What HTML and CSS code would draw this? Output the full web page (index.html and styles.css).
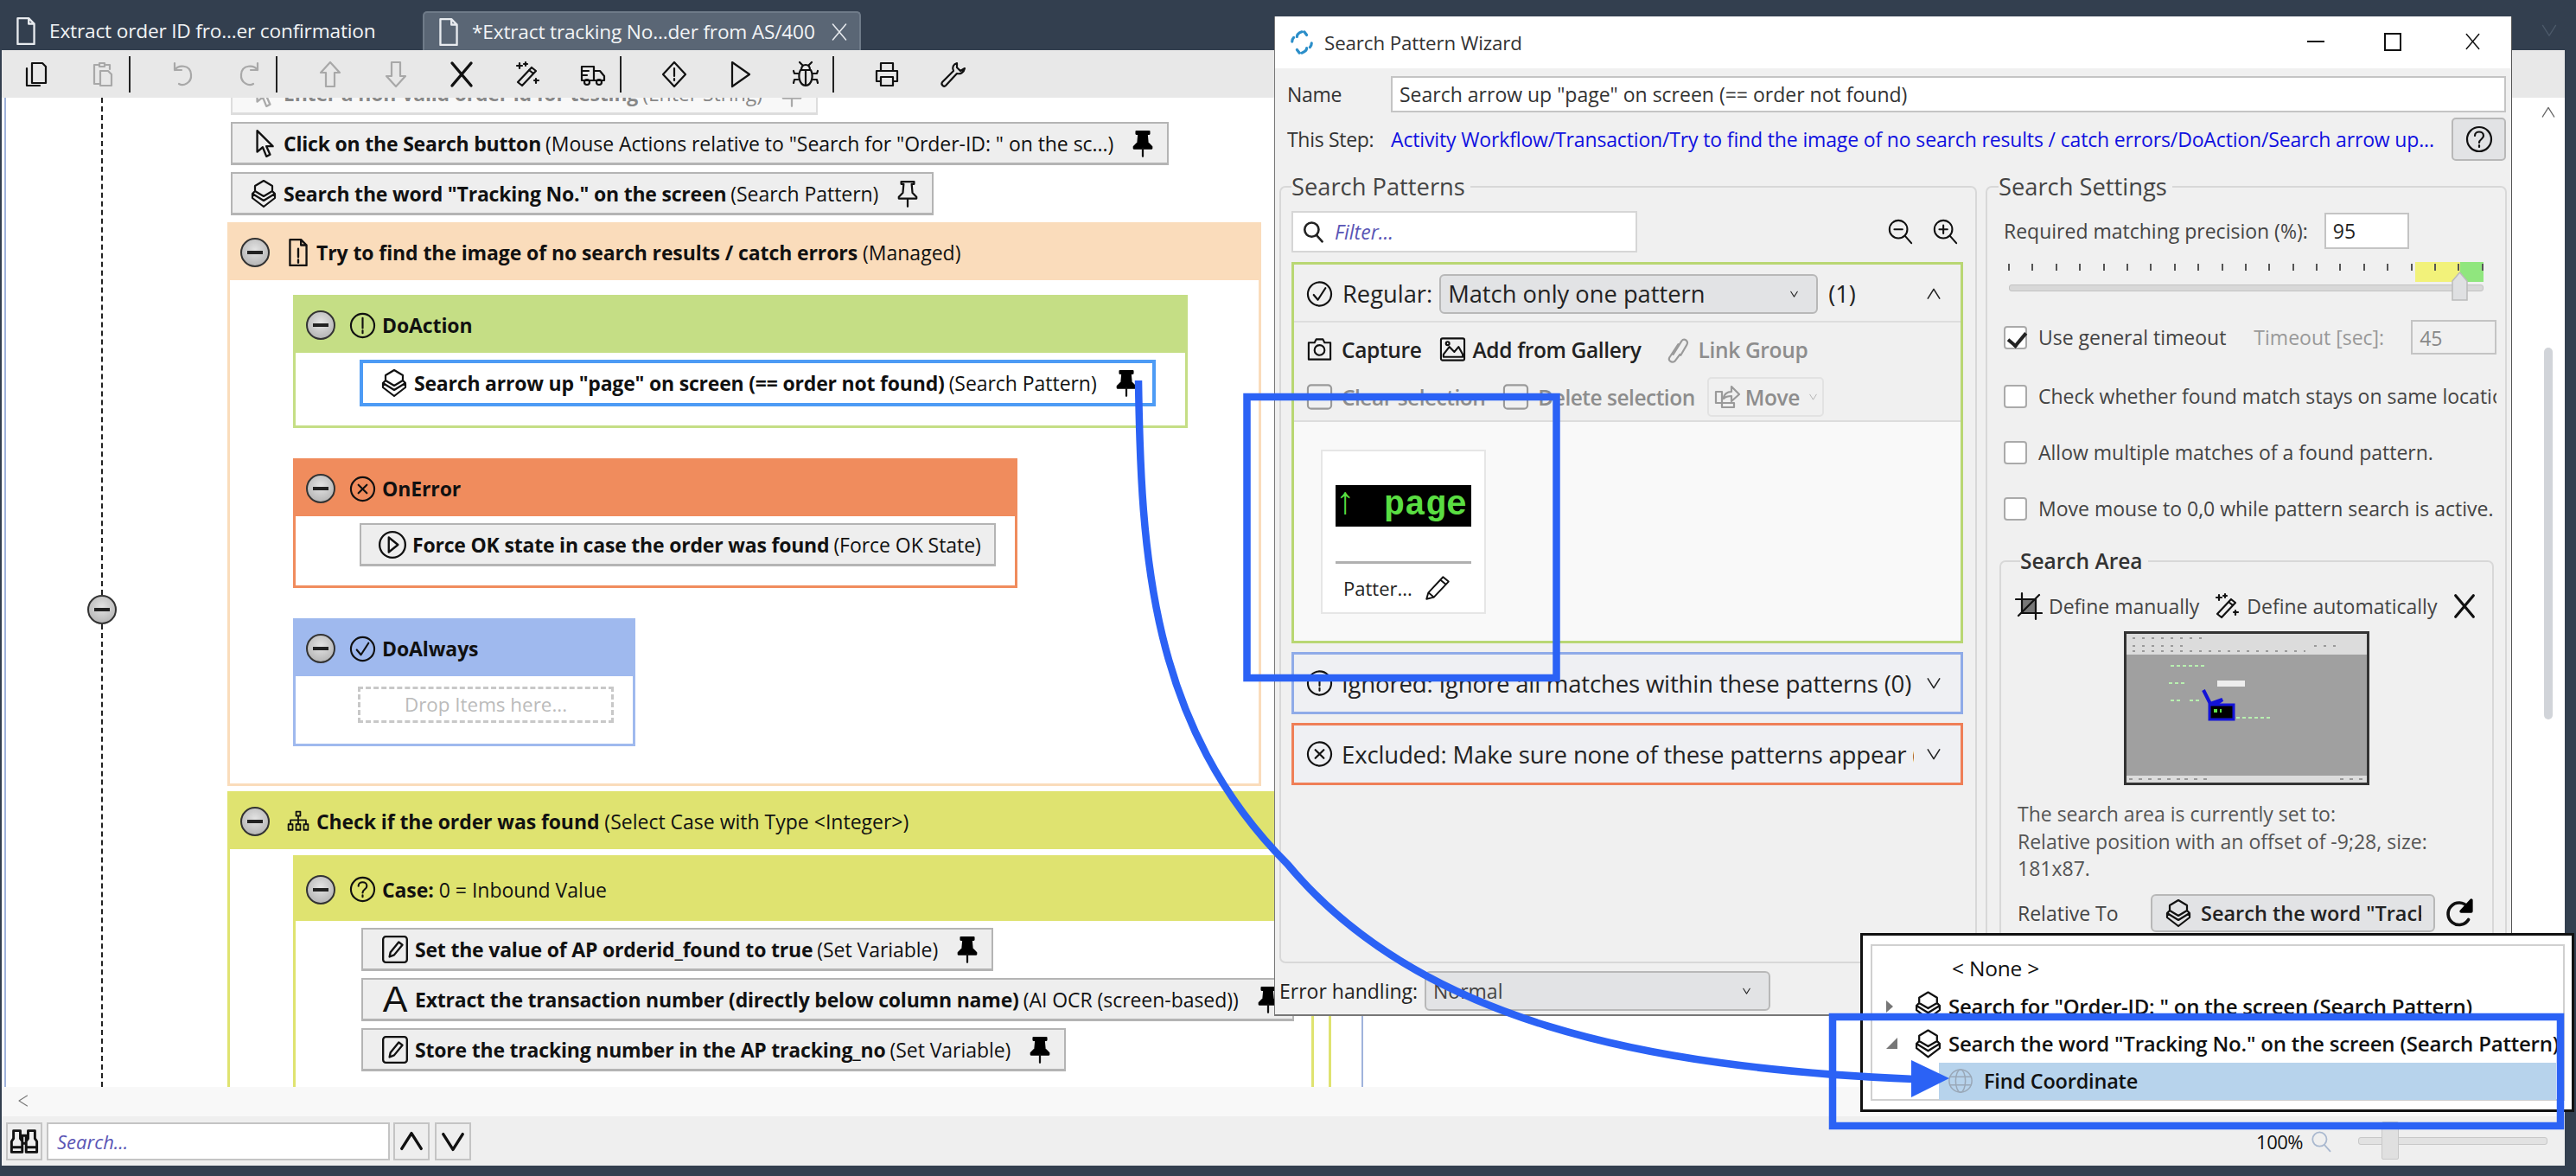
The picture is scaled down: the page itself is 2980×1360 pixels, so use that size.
FILE: index.html
```html
<!DOCTYPE html>
<html lang="en">
<head>
  <meta charset="UTF-8">
  <title>Search Pattern Wizard</title>
  <link rel="stylesheet" href="styles.css">
</head>
<body>

  <!-- icon set -->
  <svg class="defs" width="0" height="0">
    <symbol id="doc" viewBox="0 0 24 32"><path d="M3 2h12l6 6v22H3zM15 2v6h6"/></symbol>
    <symbol id="docbang" viewBox="0 0 24 32"><path d="M3 2h12l6 6v22H3zM15 2v6h6M12 12v9M12 24v3"/></symbol>
    <symbol id="copy" viewBox="0 0 32 32"><path d="M11 3h12l4 4v19H11zM5 9v20h15"/></symbol>
    <symbol id="paste" viewBox="0 0 32 32"><path d="M7 5h5M20 5h5v5M7 5v22h6M13 3h6v4h-6zM14 12h9l4 4v13H14z"/></symbol>
    <symbol id="undo" viewBox="0 0 32 32"><path d="M6 3v8h8M6 11C10 5 24 4 25 16c1 10-9 14-14 11"/></symbol>
    <symbol id="redo" viewBox="0 0 32 32"><path d="M26 3v8h-8M26 11C22 5 8 4 7 16c-1 10 9 14 14 11"/></symbol>
    <symbol id="up" viewBox="0 0 32 32"><path d="M16 2 5 14h6v16h10V14h6z"/></symbol>
    <symbol id="down" viewBox="0 0 32 32"><path d="M16 30 5 18h6V2h10v16h6z"/></symbol>
    <symbol id="cross" viewBox="0 0 32 32"><path d="M5 3 27 29M27 3 5 29"/></symbol>
    <symbol id="wand" viewBox="0 0 32 32"><path d="M5 25 21 8l5 4-16 17zM18 11l5 4M7 3v6M4 6h6M14 2v4M12 4h4M26 21v5M24 23h5"/></symbol>
    <symbol id="truck" viewBox="0 0 32 32"><path d="M3 7h14v16H3zM17 12h7l5 6v5H17zM3 12h8M3 17h6"/><circle cx="9" cy="25" r="3"/><circle cx="23" cy="25" r="3"/></symbol>
    <symbol id="diamond" viewBox="0 0 32 32"><path d="M16 2 29 16 16 30 3 16zM16 9v9M16 21v2"/></symbol>
    <symbol id="play" viewBox="0 0 32 32"><path d="M7 2 27 16 7 30z"/></symbol>
    <symbol id="bug" viewBox="0 0 32 32"><path d="M10 11h12c3 6 2 17-6 18-8-1-9-12-6-18zM11 11c0-4 2-6 5-6s5 2 5 6M16 11v18M12 5 9 2M20 5l3-3M7 15H3l-1-3M25 15h4l1-3M7 22H3l-1 4M25 22h4l1 4"/></symbol>
    <symbol id="print" viewBox="0 0 32 32"><path d="M9 12V3h14v9M9 24H4V12h24v12h-5M9 19h14v10H9z"/></symbol>
    <symbol id="wrench" viewBox="0 0 32 32"><path d="M21 3c-4 1-6 5-4 9L4 25c-2 3 2 6 4 4l13-14c4 1 8-1 9-6l-5 3-4-4z"/></symbol>
    <symbol id="layers" viewBox="0 0 32 34"><path d="M16 2 26 8v6l-10 6-10-6V8zM6 14l-3 3 13 8 13-8-3-3M3 17v5l13 10 13-10v-5"/></symbol>
    <symbol id="cursor" viewBox="0 0 24 32"><path d="M5 2v23l6-5 4 10 4-2-4-9h7z"/></symbol>
    <symbol id="pin" viewBox="0 0 28 32"><path class="solid" d="M6 1h16v3h-3l1 11 5 5v2H3v-2l5-5 1-11H6z"/><path d="M14 22v10"/></symbol>
    <symbol id="pinout" viewBox="0 0 28 32"><path d="M6 1h16v3h-3l1 11 5 5v2H3v-2l5-5 1-11H6zM14 22v10"/></symbol>
    <symbol id="cbang" viewBox="0 0 32 32"><circle cx="16" cy="16" r="14"/><path d="M16 7v12M16 22v3"/></symbol>
    <symbol id="cx" viewBox="0 0 32 32"><circle cx="16" cy="16" r="14"/><path d="m11 11 10 10M21 11 11 21"/></symbol>
    <symbol id="ccheck" viewBox="0 0 32 32"><circle cx="16" cy="16" r="14"/><path d="m9 17 5 6 9-14"/></symbol>
    <symbol id="cplay" viewBox="0 0 32 32"><circle cx="16" cy="16" r="14"/><path d="m12 8 10 8-10 8z"/></symbol>
    <symbol id="chelp" viewBox="0 0 32 32"><circle cx="16" cy="16" r="14"/><path d="M11 12c0-6 10-6 10 0 0 4-5 4-5 8M16 23v2"/></symbol>
    <symbol id="org" viewBox="0 0 32 32"><path d="M13 2h6v6h-6zM16 8v6M5 20v-6h22v6M16 14v6M2 20h6v8H2zM13 20h6v8h-6zM24 20h6v8h-6z"/></symbol>
    <symbol id="setvar" viewBox="0 0 32 32"><rect x="3" y="2" width="26" height="28" rx="3"/><path d="m10 24 1-5 9-11 4 3-9 11z"/></symbol>
    <symbol id="binoc" viewBox="0 0 32 32"><path d="M5 5h7v8l2 3v11H3V16l2-3zM20 5h7v8l2 3v11H18V16l2-3zM14 10h4v8h-4zM3 22h11M18 22h11"/></symbol>
    <symbol id="chevup" viewBox="0 0 32 32"><path d="M4 25 16 6l12 19"/></symbol>
    <symbol id="chevdown" viewBox="0 0 32 32"><path d="M4 7l12 19L28 7"/></symbol>
    <symbol id="search" viewBox="0 0 32 32"><circle cx="14" cy="13" r="10"/><path d="m21 21 8 9"/></symbol>
    <symbol id="zoomout" viewBox="0 0 32 32"><circle cx="14" cy="13" r="11"/><path d="m22 21 8 9M9 13h10"/></symbol>
    <symbol id="zoomin" viewBox="0 0 32 32"><circle cx="14" cy="13" r="11"/><path d="m22 21 8 9M9 13h10M14 8v10"/></symbol>
    <symbol id="camera" viewBox="0 0 32 32"><path d="M3 8h7l2-4h8l2 4h7v20H3z"/><circle cx="16" cy="17" r="6"/></symbol>
    <symbol id="gallery" viewBox="0 0 32 32"><rect x="2" y="3" width="28" height="26" rx="2"/><path d="M5 22l7-9 6 6 5-6 5 9v3H5z"/><circle cx="10" cy="9" r="2"/></symbol>
    <symbol id="link" viewBox="0 0 32 32"><path d="M12 22 22 6c3-4 9 0 6 5l-7 12M18 10 8 25c-3 4 2 8 6 5l6-8"/></symbol>
    <symbol id="box" viewBox="0 0 32 32"><rect x="2" y="2" width="28" height="28" rx="4"/></symbol>
    <symbol id="share" viewBox="0 0 32 32"><path d="M3 10h7v18h14v-5H3V10M12 18c0-5 4-8 9-8V4l9 9-9 8v-6c-4 0-7 1-9 3z"/></symbol>
    <symbol id="pencil" viewBox="0 0 32 32"><path d="M4 28l2-7L22 4l6 5-16 17zM19 7l6 5M6 21l6 5"/></symbol>
    <symbol id="cropi" viewBox="0 0 32 32"><path class="fillgrey" d="M7 7h16v16H7z"/><path d="M8 1v23h23M1 8h23v23M4 27 28 3"/></symbol>
    <symbol id="refresh" viewBox="0 0 32 32"><path d="M25 9A12 12 0 1 0 26 23"/><path class="solid" d="M29 2v12H18z"/></symbol>
    <symbol id="globe" viewBox="0 0 32 32"><circle cx="16" cy="16" r="14"/><ellipse cx="16" cy="16" rx="6" ry="14"/><path d="M3 11h26M3 21h26"/></symbol>
    <symbol id="logo" viewBox="0 0 32 32"><path d="M16 3c-3 1-6 3-6 6M22 7l-3-4M4 15c0-2 1-4 2-5M28 17c0 2-1 4-2 5M16 29c3-1 6-3 6-6M10 25l3 4"/></symbol>
  </svg>

  <div class="app">
    <div class="tabs">
      <div class="tab"><svg class="ic ic-doc"><use href="#doc"/></svg>Extract order ID fro...er confirmation</div>
      <div class="tab tab-on"><svg class="ic ic-doc"><use href="#doc"/></svg>*Extract tracking No...der from AS/400<svg class="ic tab-x"><use href="#cross"/></svg></div>
      <svg class="ic tabs-more"><use href="#chevdown"/></svg>
    </div>

    <div class="toolbar">
      <svg class="ic tool"><use href="#copy"/></svg>
      <svg class="ic tool off"><use href="#paste"/></svg>
      <span class="tsep"></span>
      <svg class="ic tool off"><use href="#undo"/></svg>
      <svg class="ic tool off"><use href="#redo"/></svg>
      <span class="tsep"></span>
      <svg class="ic tool off"><use href="#up"/></svg>
      <svg class="ic tool off"><use href="#down"/></svg>
      <svg class="ic tool heavy"><use href="#cross"/></svg>
      <svg class="ic tool"><use href="#wand"/></svg>
      <svg class="ic tool"><use href="#truck"/></svg>
      <span class="tsep"></span>
      <svg class="ic tool"><use href="#diamond"/></svg>
      <svg class="ic tool"><use href="#play"/></svg>
      <svg class="ic tool"><use href="#bug"/></svg>
      <span class="tsep"></span>
      <svg class="ic tool"><use href="#print"/></svg>
      <svg class="ic tool"><use href="#wrench"/></svg>
    </div>

    <div class="canvas">
      <div class="root">
        <span class="dash"></span>
        <span class="collapse collapse-root"></span>
        <div class="flow">
          <div class="step step-faded"><svg class="ic step-ic"><use href="#cursor"/></svg><b>Enter a non-valid order id for testing</b> <span>(Enter String)</span><svg class="ic pin"><use href="#pinout"/></svg></div>
          <div class="step"><svg class="ic step-ic"><use href="#cursor"/></svg><b>Click on the Search button</b> <span>(Mouse Actions relative to "Search for "Order-ID: " on the sc...)</span><svg class="ic pin"><use href="#pin"/></svg></div>
          <div class="step"><svg class="ic step-ic"><use href="#layers"/></svg><b>Search the word "Tracking No." on the screen</b> <span>(Search Pattern)</span><svg class="ic pin"><use href="#pinout"/></svg></div>

          <section class="block block-managed">
            <header class="block-head"><span class="collapse"></span><svg class="ic head-doc"><use href="#docbang"/></svg><b>Try to find the image of no search results / catch errors</b> <span>(Managed)</span></header>
            <div class="block-body body-managed">
              <section class="block block-action">
                <header class="block-head"><span class="collapse"></span><svg class="ic head-ic"><use href="#cbang"/></svg><b>DoAction</b></header>
                <div class="block-body body-inner">
                  <div class="step step-selected"><svg class="ic step-ic"><use href="#layers"/></svg><b>Search arrow up "page" on screen (== order not found)</b> <span>(Search Pattern)</span><svg class="ic pin"><use href="#pin"/></svg></div>
                </div>
              </section>
              <section class="block block-error">
                <header class="block-head"><span class="collapse"></span><svg class="ic head-ic"><use href="#cx"/></svg><b>OnError</b></header>
                <div class="block-body body-inner">
                  <div class="step"><svg class="ic step-ic"><use href="#cplay"/></svg><b>Force OK state in case the order was found</b> <span>(Force OK State)</span></div>
                </div>
              </section>
              <section class="block block-always">
                <header class="block-head"><span class="collapse"></span><svg class="ic head-ic"><use href="#ccheck"/></svg><b>DoAlways</b></header>
                <div class="block-body body-inner">
                  <div class="drop">Drop Items here...</div>
                </div>
              </section>
            </div>
          </section>

          <section class="block block-select">
            <header class="block-head"><span class="collapse"></span><svg class="ic head-doc"><use href="#org"/></svg><b>Check if the order was found</b> <span>(Select Case with Type &lt;Integer&gt;)</span></header>
            <div class="block-body body-select">
              <section class="block block-case">
                <header class="block-head"><span class="collapse"></span><svg class="ic head-ic"><use href="#chelp"/></svg><b>Case:</b> <span>0 = Inbound Value</span></header>
                <div class="block-body body-case">
                  <div class="step"><svg class="ic step-ic"><use href="#setvar"/></svg><b>Set the value of AP orderid_found to true</b> <span>(Set Variable)</span><svg class="ic pin"><use href="#pin"/></svg></div>
                  <div class="step"><span class="step-a">A</span><b>Extract the transaction number (directly below column name)</b> <span>(AI OCR (screen-based))</span><svg class="ic pin"><use href="#pin"/></svg></div>
                  <div class="step"><svg class="ic step-ic"><use href="#setvar"/></svg><b>Store the tracking number in the AP tracking_no</b> <span>(Set Variable)</span><svg class="ic pin"><use href="#pin"/></svg></div>
                </div>
              </section>
            </div>
          </section>
        </div>
      </div>
      <svg class="ic scroll-up"><use href="#chevup"/></svg>
      <span class="scroll-thumb"></span>
    </div>

    <div class="hscroll"><svg class="ic hscroll-left"><use href="#chevup"/></svg></div>

    <div class="statusbar">
      <span class="sbtn sbtn-binoc"><svg class="ic"><use href="#binoc"/></svg></span>
      <div class="sinput">Search...</div>
      <span class="sbtn"><svg class="ic heavy"><use href="#chevup"/></svg></span>
      <span class="sbtn"><svg class="ic heavy"><use href="#chevdown"/></svg></span>
      <div class="zoom">
        <span>100%</span>
        <svg class="ic zoom-mag"><use href="#search"/></svg>
        <div class="zoom-track"><span class="zoom-thumb"></span></div>
      </div>
    </div>
  </div>

  <!-- wizard window -->
  <div class="wizard">
    <div class="wiz-title">
      <svg class="ic wiz-logo"><use href="#logo"/></svg>
      <span class="wiz-name">Search Pattern Wizard</span>
      <span class="winbtn winbtn-min"></span>
      <span class="winbtn winbtn-max"></span>
      <svg class="ic winbtn-x"><use href="#cross"/></svg>
    </div>
    <div class="wiz-row wiz-namerow">
      <label class="wiz-label">Name</label>
      <div class="field field-name">Search arrow up "page" on screen (== order not found)</div>
    </div>
    <div class="wiz-row wiz-steprow">
      <label class="wiz-label">This Step:</label>
      <a class="steplink">Activity Workflow/Transaction/Try to find the image of no search results / catch errors/DoAction/Search arrow up...</a>
      <span class="helpbtn"><svg class="ic"><use href="#chelp"/></svg></span>
    </div>

    <div class="wiz-cols">
      <fieldset class="group group-patterns">
        <legend>Search Patterns</legend>
        <div class="filter-row">
          <div class="filter"><svg class="ic heavy"><use href="#search"/></svg><span>Filter...</span></div>
          <div class="zoomers"><svg class="ic"><use href="#zoomout"/></svg><svg class="ic"><use href="#zoomin"/></svg></div>
        </div>

        <div class="pbox pbox-regular">
          <div class="pbox-head">
            <svg class="ic pbox-ic"><use href="#ccheck"/></svg>
            <span>Regular:</span>
            <div class="select select-match"><span>Match only one pattern</span><svg class="ic sel-arrow"><use href="#chevdown"/></svg></div>
            <span>(1)</span>
            <svg class="ic pbox-chev"><use href="#chevup"/></svg>
          </div>
          <div class="pbox-tools">
            <div class="tools-line">
              <span class="tbtn"><svg class="ic"><use href="#camera"/></svg>Capture</span>
              <span class="tbtn tbtn-gal"><svg class="ic"><use href="#gallery"/></svg>Add from Gallery</span>
              <span class="tbtn tbtn-off"><svg class="ic"><use href="#link"/></svg>Link Group</span>
            </div>
            <div class="tools-line tools-line2">
              <span class="tbtn tbtn-off"><svg class="ic"><use href="#box"/></svg>Clear selection</span>
              <span class="tbtn tbtn-off tbtn-del"><svg class="ic"><use href="#box"/></svg>Delete selection</span>
              <span class="movebtn"><svg class="ic"><use href="#share"/></svg>Move<svg class="ic move-arrow"><use href="#chevdown"/></svg></span>
            </div>
          </div>
          <div class="pbox-content">
            <div class="card">
              <div class="card-img"><div class="card-pic"><span class="card-arrow">↑</span><span>page</span></div></div>
              <div class="card-foot"><span>Patter...</span><svg class="ic"><use href="#pencil"/></svg></div>
            </div>
          </div>
        </div>

        <div class="pbox pbox-ignored">
          <svg class="ic pbox-ic"><use href="#cbang"/></svg>
          <span class="pbox-text">Ignored: Ignore all matches within these patterns (0)</span>
          <svg class="ic pbox-chev"><use href="#chevdown"/></svg>
        </div>
        <div class="pbox pbox-excluded">
          <svg class="ic pbox-ic"><use href="#cx"/></svg>
          <span class="pbox-text">Excluded: Make sure none of these patterns appear (0)</span>
          <svg class="ic pbox-chev"><use href="#chevdown"/></svg>
        </div>
      </fieldset>

      <fieldset class="group group-settings">
        <legend>Search Settings</legend>
        <div class="prec-row">
          <span>Required matching precision (%):</span>
          <div class="field field-prec">95</div>
        </div>
        <div class="slider">
          <span class="zone zone-y"></span><span class="zone zone-g"></span>
          <div class="ticks">
            <i></i><i></i><i></i><i></i><i></i><i></i><i></i><i></i><i></i><i></i><i></i><i></i><i></i><i></i><i></i><i></i><i></i><i></i><i></i><i></i><i></i>
          </div>
          <div class="slider-track"></div>
          <svg class="slider-thumb" viewBox="0 0 19 34"><path d="M1 11 9.5 1 18 11v22H1z"/></svg>
        </div>
        <div class="checks">
          <div class="check-row">
            <span class="cb cb-on"></span>
            <span>Use general timeout</span>
            <span class="muted">Timeout [sec]:</span>
            <div class="field field-timeout">45</div>
          </div>
          <div class="check-row"><span class="cb"></span><span>Check whether found match stays on same location</span></div>
          <div class="check-row"><span class="cb"></span><span>Allow multiple matches of a found pattern.</span></div>
          <div class="check-row"><span class="cb"></span><span>Move mouse to 0,0 while pattern search is active.</span></div>
        </div>

        <fieldset class="group group-area">
          <legend>Search Area</legend>
          <div class="define-row">
            <svg class="ic"><use href="#cropi"/></svg><span>Define manually</span>
            <svg class="ic define-wand"><use href="#wand"/></svg><span>Define automatically</span>
            <svg class="ic heavy define-x"><use href="#cross"/></svg>
          </div>
          <svg class="shot" viewBox="0 0 284 178">
            <rect width="284" height="178" fill="#333"/>
            <rect x="3" y="3" width="278" height="172" fill="#a0a0a0"/>
            <rect x="3" y="3" width="278" height="24" fill="#dcdcdc"/>
            <rect x="3" y="167" width="278" height="8" fill="#dcdcdc"/>
            <path d="M10 8h80M10 17h60M10 23h200M220 17h30" stroke="#9a9a9a" stroke-width="2" stroke-dasharray="3 8"/>
            <path d="M6 171h60M70 171h30M250 171h30" stroke="#999" stroke-width="2" stroke-dasharray="4 7"/>
            <path d="M54 40h42M52 60h20M54 80h12M76 80h14M116 100h56" stroke="#b8f0b0" stroke-width="2" stroke-dasharray="4 3"/>
            <rect x="108" y="57" width="32" height="7" fill="#eee"/>
            <path d="M92 68 100 84l14-5-10 7" fill="none" stroke="#1313d8" stroke-width="4"/>
            <rect x="99" y="85" width="28" height="17" fill="#000" stroke="#1313d8" stroke-width="3"/>
            <path d="M104 92h4M111 92h2" stroke="#5fe24a" stroke-width="4"/>
          </svg>
          <p class="area-text">The search area is currently set to:<br>Relative position with an offset of -9;28, size:<br>181x87.</p>
          <div class="rel-row">
            <span class="rel-label">Relative To</span>
            <div class="relbtn"><svg class="ic"><use href="#layers"/></svg><span class="rel-clip">Search the word "Tracking No."</span></div>
            <svg class="ic heavy rel-refresh"><use href="#refresh"/></svg>
          </div>
        </fieldset>
      </fieldset>
    </div>

    <div class="wiz-foot">
      <label>Error handling:</label>
      <div class="select select-error"><span>Normal</span><svg class="ic sel-arrow"><use href="#chevdown"/></svg></div>
    </div>
  </div>

  <!-- relative-to popup -->
  <div class="popup">
    <div class="tree">
      <div class="node node-none">&lt; None &gt;</div>
      <div class="node"><span class="tri tri-r"></span><svg class="ic"><use href="#layers"/></svg><span>Search for "Order-ID: " on the screen (Search Pattern)</span></div>
      <div class="node"><span class="tri tri-d"></span><svg class="ic"><use href="#layers"/></svg><span>Search the word "Tracking No." on the screen (Search Pattern)</span></div>
      <div class="node node-sel"><svg class="ic node-globe"><use href="#globe"/></svg><span>Find Coordinate</span></div>
    </div>
  </div>

  <!-- annotations drawn over the screenshot -->
  <svg class="marks" viewBox="0 0 2980 1360">
    <rect x="1442.5" y="459" width="358" height="325"/>
    <rect x="2120" y="1176" width="842" height="126"/>
    <path d="M1317 440C1320 640 1330 840 1490 1000C1640 1180 1900 1235 2215 1248"/>
    <polygon points="2211,1226 2255,1247 2211,1269"/>
  </svg>

</body>
</html>
```

FILE: styles.css
```css
* { box-sizing: border-box; }

html, body {
  margin: 0;
  padding: 0;
  height: 100%;
}
body {
  position: relative;
  width: 2980px;
  height: 1360px;
  overflow: hidden;
  background: #333f4f;
  font-family: "Open Sans", "Noto Sans", sans-serif;
  font-size: 23px;
  color: #111;
}
.defs { position: absolute; }

.ic {
  display: block;
  flex: none;
  width: 30px;
  height: 30px;
  fill: none;
  stroke: #111;
  stroke-width: 2.2;
  stroke-linejoin: round;
  stroke-linecap: round;
  overflow: visible;
}
symbol .solid { fill: #000; stroke: #000; }
symbol .fillgrey { fill: #777; stroke: none; }
.heavy { stroke-width: 3.4; }

/* main window */
.app {
  display: flex;
  flex-direction: column;
  height: 1360px;
  padding: 0 13px 12px 2px;
}
.tabs {
  position: relative;
  display: flex;
  align-items: flex-end;
  height: 58px;
  color: #f2f4f6;
  font-size: 22.7px;
  letter-spacing: -0.2px;
}
.tab {
  display: flex;
  align-items: center;
  width: 487px;
  height: 45px;
  padding-left: 15px;
  white-space: nowrap;
}
.tab-on {
  width: 507px;
  background: #5a6675;
  border: 2px solid #6f7b89;
  border-bottom: 0;
  border-radius: 5px 5px 0 0;
}
.ic-doc { width: 26px; height: 34px; margin-right: 14px; stroke: #e8ebef; }
.tab-x { width: 22px; height: 26px; margin-left: 17px; stroke: #e8ebef; }
.tabs-more {
  position: absolute;
  right: 8px;
  top: 25px;
  width: 20px;
  height: 20px;
  stroke: #4d5a6a;
}

.toolbar {
  display: flex;
  align-items: center;
  height: 55px;
  padding-left: 24px;
  background: #e8e8e8;
}
.tool { width: 32px; height: 34px; margin-right: 44px; }
.tool.off { stroke: #a8a8a8; }
.tsep {
  width: 2px;
  height: 42px;
  background: #222;
  margin: 0 45px 0 -29px;
}

.canvas {
  position: relative;
  flex: 1;
  min-height: 0;
  overflow: hidden;
  background: #fff;
}
.root {
  position: relative;
  display: flow-root;
  width: 1572px;
  height: 100%;
  margin-left: 3px;
  border-left: 2px solid #9fb3dc;
  border-right: 2px solid #9fb3dc;
}
.dash {
  position: absolute;
  left: 110px;
  top: 0;
  bottom: 0;
  border-left: 2px dashed #222;
}
.collapse {
  display: block;
  position: relative;
  flex: none;
  width: 34px;
  height: 34px;
  border-radius: 50%;
  border: 2px solid #333;
  background: radial-gradient(circle at 50% 40%, #e4e4e4, #a9a9a9);
}
.collapse::before {
  content: "";
  position: absolute;
  left: 6px;
  right: 6px;
  top: 13px;
  height: 4px;
  background: #222;
}
.collapse-root {
  position: absolute;
  left: 94px;
  top: 575px;
}
.scroll-up {
  position: absolute;
  right: 9px;
  top: 8px;
  width: 20px;
  height: 18px;
  stroke: #666;
}
.scroll-thumb {
  position: absolute;
  right: 14px;
  top: 289px;
  width: 10px;
  height: 430px;
  background: #d1d4d9;
  border-radius: 5px;
}

.flow {
  display: flex;
  flex-direction: column;
  align-items: flex-start;
  margin-top: -30px;
  margin-left: 256px;
}

.step {
  display: flex;
  align-items: center;
  flex: none;
  width: fit-content;
  height: 50px;
  margin: 0 0 8px 4px;
  padding: 0 15px 0 19px;
  background: #eee;
  border: 2px solid #b4b4b4;
  border-bottom-width: 3px;
  white-space: nowrap;
}
.step b { font-weight: 700; letter-spacing: -0.2px; }
.step span { margin-left: 5px; letter-spacing: -0.05px; }
.step-ic { width: 34px; height: 34px; margin-right: 6px; }
.step-a {
  width: 34px;
  margin: 0 6px 0 0 !important;
  font-family: "Liberation Sans", sans-serif;
  font-size: 43px;
  font-weight: 400;
  line-height: 1;
  text-align: center;
}
.step-faded { background: #f8f8f8; border-color: #ddd; color: #888; }
.step-faded .ic { stroke: #aaa; }
.step-selected { background: #fff; border: 4px solid #4d9bf5; height: 54px; padding-right: 17px; }
.pin { width: 26px; height: 34px; margin-left: 21px; stroke-width: 2.4; }

.block { flex: none; border: 3px solid transparent; border-top: 0; }
.block-head {
  display: flex;
  align-items: center;
  white-space: nowrap;
  padding: 3px 0 0 15px;
  margin: 0 -3px;
}
.block-head b { font-weight: 700; letter-spacing: -0.1px; }
.block-head span:not(.collapse) { margin-left: 6px; }
.block-body { background: #fff; }
.head-doc { width: 26px; height: 34px; margin: 0 8px 0 20px; }
.head-ic { width: 31px; height: 31px; margin: 0 7px 0 16px; }

.block-managed { width: 1196px; border-color: #fadcbb; margin-bottom: 6px; }
.block-managed > .block-head { height: 67px; background: #fadcbb; }
.body-managed { padding: 17px 0 43px 73px; display: flex; flex-direction: column; gap: 35px; }

.block-action .block-head,
.block-error .block-head,
.block-always .block-head { height: 67px; }
.body-inner { padding: 8px 0 14px 74px; }
.body-inner .step { margin-left: 0; }
.block-action { width: 1035px; border-color: #c5de85; }
.block-action .block-head { background: #c5de85; }
.block-error { width: 838px; border-color: #f08c5d; }
.block-error .block-head { background: #f08c5d; }
.block-always { width: 396px; border-color: #9fb9ee; }
.block-always .block-head { background: #9fb9ee; }
.drop {
  width: 296px;
  height: 42px;
  margin: 4px 0 10px -2px;
  border: 3px dashed #c8c8c8;
  color: #bbb;
  font-size: 22.4px;
  text-align: center;
  line-height: 36px;
  white-space: nowrap;
}

.block-select { width: 1277px; border-color: #dfe370; }
.block-select > .block-head { height: 67px; background: #dfe370; }
.body-select { padding: 7px 0 0 73px; }
.block-case { width: 1181px; border-color: #dfe370; }
.block-case > .block-head { height: 76px; background: #dfe370; }
.body-case { padding: 8px 0 60px 76px; }
.body-case .step { margin-left: 0; padding-left: 20px; }

.hscroll {
  height: 34px;
  background: #f8f8f8;
  padding: 8px 0 0 14px;
}
.hscroll-left { width: 22px; height: 16px; transform: rotate(-90deg); stroke: #777; }

.statusbar {
  position: relative;
  display: flex;
  align-items: center;
  height: 57px;
  padding-left: 5px;
  background: #efefef;
}
.sbtn {
  display: flex;
  align-items: center;
  justify-content: center;
  width: 42px;
  height: 44px;
  margin-right: 6px;
  border: 2px solid #c4c4c4;
  background: #eee;
}
.sbtn-binoc { margin-right: 5px; }
.sbtn-binoc .ic { width: 36px; height: 36px; stroke-width: 2.6; }
.sbtn .heavy { stroke-width: 3.6; }
.sinput {
  width: 397px;
  height: 44px;
  margin-right: 4px;
  padding-left: 10px;
  border: 2px solid #c4c4c4;
  background: #fff;
  color: #5a55b5;
  font-style: italic;
  font-size: 22px;
  line-height: 40px;
}
.zoom {
  display: flex;
  align-items: center;
  margin-left: auto;
  padding-right: 20px;
  font-size: 22px;
  letter-spacing: -0.5px;
}
.zoom-mag { width: 26px; height: 30px; margin: 0 30px 0 8px; stroke: #a9b8cf; }
.zoom-track {
  position: relative;
  width: 219px;
  height: 9px;
  background: #e2e2e2;
  border: 1px solid #c8c8c8;
  border-radius: 3px;
}
.zoom-thumb {
  position: absolute;
  left: 26px;
  top: -19px;
  width: 20px;
  height: 44px;
  background: #e0e0e0;
  border: 1px solid #c8c8c8;
  border-radius: 2px;
}

/* wizard window */
.wizard {
  position: absolute;
  left: 1474px;
  top: 19px;
  width: 1432px;
  height: 1156px;
  overflow: hidden;
  background: #f0f0f0;
  border-right: 1px solid #555;
  border-bottom: 2px solid #777;
  border-left: 1px solid #777;
  font-size: 23px;
  color: #222;
}
.wiz-title {
  position: relative;
  display: flex;
  align-items: center;
  height: 60px;
  padding-left: 16px;
  background: #fff;
}
.wiz-logo { width: 30px; height: 30px; margin-right: 11px; stroke: #2b8ec9; stroke-width: 3.4; }
.wiz-name { color: #333; font-size: 22.3px; letter-spacing: -0.1px; }
.winbtn { position: absolute; }
.winbtn-min { left: 1194px; top: 28px; width: 20px; height: 2px; background: #111; }
.winbtn-max { left: 1283px; top: 19px; width: 20px; height: 21px; border: 2px solid #111; }
.winbtn-x { position: absolute; left: 1375px; top: 18px; width: 21px; height: 22px; }

.wiz-row { display: flex; align-items: center; padding: 0 6px 0 14px; }
.wiz-label { width: 120px; flex: none; color: #333; white-space: nowrap; letter-spacing: -0.3px; }
.wiz-namerow { height: 42px; margin-top: 9px; }
.field {
  background: #fff;
  border: 2px solid #c4c4c4;
  padding-left: 8px;
  line-height: 38px;
  white-space: nowrap;
}
.field-name { flex: 1; color: #333; }
.wiz-steprow { height: 50px; margin-top: 6px; }
.steplink { flex: 1; min-width: 0; color: #1010e0; white-space: nowrap; overflow: hidden; letter-spacing: -0.15px; }
.helpbtn {
  display: flex;
  align-items: center;
  justify-content: center;
  flex: none;
  width: 63px;
  height: 50px;
  margin-left: 19px;
  background: #e2e3e5;
  border: 2px solid #b8b8b8;
  border-radius: 5px;
}
.helpbtn .ic { width: 32px; height: 34px; }

.wiz-cols {
  display: flex;
  gap: 10px;
  height: 913px;
  margin-top: 15px;
  padding-left: 5px;
}
.group {
  margin: 0;
  padding: 0;
  min-width: 0;
  border: 2px solid #d8d8d8;
  border-radius: 7px;
}
.group legend {
  padding: 0 6px 0 0;
  height: 30px;
  line-height: 30px;
  font-size: 27.3px;
  color: #444;
  white-space: nowrap;
}
.group-patterns { width: 807px; padding: 13px 14px 0 12px; }
.group-settings { width: 603px; padding: 15px 12px 0 19px; overflow: hidden; }
.group-settings > legend { margin-left: -6px; }

.filter-row { display: flex; align-items: center; height: 48px; margin-bottom: 11px; }
.filter {
  display: flex;
  align-items: center;
  width: 400px;
  height: 48px;
  padding-left: 10px;
  background: #fff;
  border: 2px solid #d6d6d6;
  color: #5a55b5;
  font-style: italic;
}
.filter .ic { width: 26px; height: 28px; margin-right: 12px; stroke: #222; stroke-width: 3.2; }
.zoomers { display: flex; gap: 22px; margin-left: auto; padding-right: 6px; }
.zoomers .ic { width: 30px; height: 32px; }

.pbox { background: #eff0f3; border: 3px solid; font-size: 24.5px; }
.pbox-ic { width: 31px; height: 32px; margin: 0 11px 0 14px; }
.pbox-chev { width: 22px; height: 18px; margin-left: auto; margin-right: 20px; stroke: #222; stroke-width: 2.8; }
.pbox-regular { height: 441px; border-color: #b9d773; background: #f0f0f0; display: flex; flex-direction: column; }
.pbox-head {
  display: flex;
  align-items: center;
  flex: none;
  height: 67px;
  padding-top: 2px;
  font-size: 27.3px;
  border-bottom: 2px solid #ddd;
}
.select {
  display: flex;
  align-items: center;
  background: #e2e3e5;
  border: 2px solid #b8b8b8;
  border-radius: 6px;
  padding-left: 8px;
  white-space: nowrap;
}
.sel-arrow { width: 15px; height: 10px; margin-left: auto; margin-right: 18px; stroke: #222; stroke-width: 3.4; }
.select-match { width: 438px; height: 46px; margin: 0 12px 0 8px; }

.pbox-tools { flex: none; height: 115px; padding: 14px 0 0 0; border-bottom: 2px solid #ddd; }
.tools-line { display: flex; align-items: center; height: 34px; }
.tools-line2 { height: 46px; margin-top: 15px; }
.tbtn { display: flex; align-items: center; white-space: nowrap; font-weight: 600; letter-spacing: -0.35px; }
.tbtn .ic { width: 31px; height: 32px; margin: 0 10px 0 14px; }
.tbtn-gal { margin-left: 6px; }
.tbtn-gal .ic { margin: 0 8px 0 14px; }
.tbtn-off { color: #8d8d8d; margin-left: 25px; }
.tbtn-off .ic { stroke: #9a9a9a; margin-left: 0; }
.tools-line2 .tbtn { letter-spacing: -0.5px; }
.tools-line2 .tbtn-off:first-child { margin-left: 14px; }
.tbtn-del { margin-left: 20px !important; }
.movebtn {
  display: flex;
  align-items: center;
  height: 46px;
  width: 135px;
  margin-left: 14px;
  padding-left: 5px;
  border: 2px solid #e2e2e2;
  border-radius: 5px;
  color: #8d8d8d;
  font-weight: 600;
  letter-spacing: -0.35px;
}
.movebtn .ic { width: 32px; height: 34px; margin-right: 5px; stroke: #9a9a9a; }
.movebtn .move-arrow { width: 15px; height: 10px; margin: 0 0 0 8px; }

.pbox-content { flex: 1; padding: 32px 0 0 31px; background: #f9f9f9; }
.card {
  display: flex;
  flex-direction: column;
  width: 191px;
  height: 190px;
  padding: 0 15px;
  background: #fff;
  border: 2px solid #e6e6e6;
}
.card-img { height: 130px; padding-top: 39px; border-bottom: 3px solid #b0b0b0; }
.card-pic {
  display: flex;
  align-items: center;
  height: 48px;
  background: #000;
  color: #5ade42;
  font-family: "Liberation Mono", monospace;
  font-weight: 700;
  font-size: 40px;
  line-height: 40px;
  overflow: hidden;
}
.card-arrow { font-size: 44px; width: 58px; margin-left: -2px; margin-top: -6px; }
.card-foot { display: flex; align-items: center; flex: 1; padding-left: 9px; font-size: 22px; color: #222; white-space: nowrap; }
.card-foot .ic { width: 34px; height: 34px; margin-left: 12px; stroke-width: 1.8; }

.pbox-ignored,
.pbox-excluded {
  display: flex;
  align-items: center;
  height: 72px;
  margin-top: 10px;
}
.pbox-ignored { border-color: #8fabe8; }
.pbox-excluded { border-color: #ef7f57; }
.pbox-text { width: 662px; overflow: hidden; white-space: nowrap; font-size: 27.6px; font-weight: 500; letter-spacing: -0.2px; }
.pbox-ignored .pbox-ic, .pbox-excluded .pbox-ic { margin-right: 10px; }

.prec-row { display: flex; align-items: center; height: 42px; color: #444; white-space: nowrap; }
.field-prec { width: 98px; height: 42px; margin-left: 19px; color: #222; }
.slider { position: relative; height: 45px; margin-top: 15px; }
.zone { position: absolute; top: 0; height: 23px; }
.zone-y { left: 476px; width: 52px; background: #f2f27a; }
.zone-g { left: 528px; width: 27px; background: #90e67e; }
.ticks {
  position: absolute;
  left: 5px;
  width: 550px;
  top: 2px;
  display: flex;
  justify-content: space-between;
}
.ticks i { display: block; width: 2px; height: 8px; background: #555; }
.slider-track {
  position: absolute;
  left: 6px;
  width: 549px;
  top: 26px;
  height: 8px;
  background: #d8d8d8;
  border: 1px solid #c2c2c2;
  border-radius: 3px;
}
.slider-thumb {
  position: absolute;
  left: 518px;
  top: 11px;
  width: 19px;
  height: 34px;
  fill: #dfe0e2;
  stroke: #bbb;
  stroke-width: 1.5;
}

.checks { display: flex; flex-direction: column; gap: 25px; width: 570px; margin-top: 22px; }
.check-row { display: flex; align-items: center; height: 40px; white-space: nowrap; overflow: hidden; color: #444; flex: none; }
.check-row:nth-child(2) { margin-top: 3px; }
.cb {
  position: relative;
  flex: none;
  width: 27px;
  height: 27px;
  margin-right: 13px;
  background: #fff;
  border: 2px solid #aaa;
  border-radius: 4px;
}
.cb-on::before {
  content: "";
  position: absolute;
  left: 7px;
  top: 1px;
  width: 9px;
  height: 17px;
  border: solid #222;
  border-width: 0 4px 4px 0;
  transform: rotate(40deg);
}
.muted { margin-left: 32px; color: #999; }
.field-timeout { width: 99px; height: 40px; margin-left: 31px; background: #f0f0f0; color: #888; }

.group-area { width: 572px; height: 470px; margin: 26px 0 0 -5px; padding: 15px 14px 0 19px; }
.group-area legend { font-size: 24.5px; font-weight: 600; color: #333; margin-left: 3px; }
.define-row { display: flex; align-items: center; height: 44px; margin-left: -3px; white-space: nowrap; color: #444; }
.define-row .ic { width: 32px; height: 34px; margin-right: 7px; }
.define-row .define-wand { margin-left: 16px; }
.define-row .define-x { width: 30px; height: 32px; margin: 0 0 0 17px; }
.shot { display: block; width: 284px; height: 178px; margin: 7px 0 0 123px; }
.area-text { margin: 18px 0 0 0; line-height: 31.5px; color: #555; white-space: nowrap; }
.rel-row { display: flex; align-items: center; height: 42px; margin-top: 14px; color: #444; white-space: nowrap; }
.rel-label { width: 154px; flex: none; }
.relbtn {
  display: flex;
  align-items: center;
  flex: none;
  width: 329px;
  height: 44px;
  padding: 0 14px 0 14px;
  background: #e2e3e5;
  border: 2px solid #b8b8b8;
  border-radius: 6px;
  font-weight: 600;
  color: #222;
}
.relbtn .ic { width: 32px; height: 34px; margin-right: 10px; }
.rel-clip { flex: 1; min-width: 0; overflow: hidden; font-size: 23.5px; }
.rel-refresh { width: 34px; height: 34px; margin-left: 11px; }

.wiz-foot {
  display: flex;
  align-items: center;
  height: 46px;
  margin-top: 9px;
  padding-left: 5px;
}
.wiz-foot label { width: 168px; flex: none; white-space: nowrap; }
.select-error { width: 400px; height: 46px; color: #444; }

/* relative-to popup */
.popup {
  position: absolute;
  left: 2152px;
  top: 1079px;
  width: 826px;
  height: 207px;
  padding: 10px 8px 10px 9px;
  background: #fff;
  border: 3px solid #111;
}
.tree {
  height: 100%;
  padding: 4px 8px 0 0;
  border: 2px solid #d0d0d0;
  font-size: 24px;
  font-weight: 600;
  letter-spacing: -0.2px;
}
.node {
  position: relative;
  display: flex;
  align-items: center;
  height: 43.5px;
  padding-left: 48px;
  white-space: nowrap;
}
.node .ic { width: 33px; height: 36px; margin-right: 7px; }
.node-none { padding-left: 92px; font-size: 24.5px; font-weight: 500; }
.tri { position: absolute; left: 16px; top: 15px; width: 0; height: 0; border-style: solid; }
.tri-r { border-width: 7px 0 7px 8px; border-color: transparent transparent transparent #777; }
.tri-d { border-width: 0 0 13px 13px; border-color: transparent transparent #777 transparent; }
.node-sel { margin-left: 77px; padding-left: 10px; background: #b7d3ec; font-size: 23.5px; }
.node-sel .node-globe { width: 30px; height: 32px; margin-right: 12px; stroke: #9aa8b8; stroke-width: 1.6; }

/* blue callouts */
.marks {
  position: absolute;
  left: 0;
  top: 0;
  width: 2980px;
  height: 1360px;
  pointer-events: none;
  fill: none;
  stroke: #2b62f5;
  stroke-width: 8.5;
}
.marks polygon { fill: #2b62f5; stroke: none; }
```
